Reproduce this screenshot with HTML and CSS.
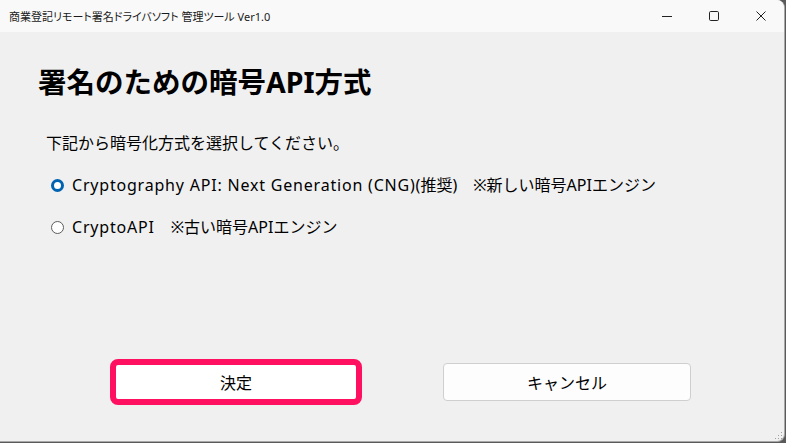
FILE: index.html
```html
<!DOCTYPE html>
<html lang="ja">
<head>
    <meta charset="UTF-8" />
    <title>商業登記リモート署名ドライバソフト 管理ツール Ver1.0</title>
    <link rel="stylesheet" href="styles.css">
</head>
<body>
    <div class="window">
        <header class="titlebar">
            <span class="title">商業登記リモート署名ドライバソフト 管理ツール Ver1.0</span>
            <div class="controls">
                <span class="ctl">
                    <svg width="10" height="10" viewBox="0 0 10 10"><path d="M0 5.5h10" stroke="#222" stroke-width="1"/></svg>
                </span>
                <span class="ctl">
                    <svg width="10" height="10" viewBox="0 0 10 10"><rect x="0.5" y="0.5" width="9" height="9" rx="1.2" fill="none" stroke="#222" stroke-width="1"/></svg>
                </span>
                <span class="ctl">
                    <svg width="10" height="10" viewBox="0 0 10 10"><path d="M0.5 0.5l9 9M9.5 0.5l-9 9" stroke="#222" stroke-width="1"/></svg>
                </span>
            </div>
        </header>

        <main class="content">
            <h1>署名のための暗号API方式</h1>
            <p class="lead">下記から暗号化方式を選択してください。</p>

            <div class="options">
                <label class="option">
                    <input type="radio" name="api" checked />
                    <span class="radio"></span>
                    <span><span class="latin">Cryptography API: Next Generation (CNG)</span>(推奨)　※新しい暗号APIエンジン</span>
                </label>
                <label class="option">
                    <input type="radio" name="api" />
                    <span class="radio"></span>
                    <span><span class="latin">CryptoAPI</span>　※古い暗号APIエンジン</span>
                </label>
            </div>

            <div class="actions">
                <button class="btn btn-ok">決定</button>
                <button class="btn btn-cancel">キャンセル</button>
            </div>
        </main>
        <span class="grip"></span>
    </div>
</body>
</html>
```

FILE: styles.css
```css
* {
    margin: 0;
    padding: 0;
    box-sizing: border-box;
    font-family: "Noto Sans", "Noto Sans CJK JP", sans-serif;
}
body {
    width: 786px;
    height: 443px;
    background: #5a5a5a;
    overflow: hidden;
}
.window {
    position: relative;
    width: 785px;
    height: 442px;
    background: #f0f0f0;
    border: 1px solid #a8a8a8;
    border-left: none;
    border-top: none;
    border-radius: 0 8px 8px 0;
    display: flex;
    flex-direction: column;
    overflow: hidden;
    color: #000;
}
.titlebar {
    height: 32px;
    background: #f9f9f9;
    display: flex;
    align-items: center;
    justify-content: space-between;
    padding-left: 9px;
}
.title {
    font-size: 11px;
    color: #1a1a1a;
    font-feature-settings: "palt";
}
.controls {
    display: flex;
    height: 100%;
}
.ctl {
    width: 47px;
    display: flex;
    align-items: center;
    justify-content: center;
}
.content {
    flex: 1;
    padding: 30px 0 0 38px;
    display: flex;
    flex-direction: column;
}
h1 {
    font-size: 28.5px;
    font-weight: 700;
    line-height: 40px;
}
.lead {
    margin: 31px 0 0 8px;
    font-size: 16px;
    line-height: 20px;
}
.options {
    display: flex;
    flex-direction: column;
    gap: 22px;
    margin: 22px 0 0 13px;
}
.option {
    display: flex;
    align-items: center;
    gap: 8px;
    font-size: 16px;
    line-height: 20px;
}
.latin {
    letter-spacing: 0.8px;
}
.option input {
    display: none;
}
.radio {
    width: 13px;
    height: 13px;
    border-radius: 50%;
    border: 1px solid #5c5c5c;
    background: #fff;
}
.option input:checked + .radio {
    border: 3.5px solid #0063b1;
    background: #fff;
}
.actions {
    display: flex;
    gap: 81px;
    margin: 122px 0 0 72px;
    align-items: center;
}
.btn {
    width: 248px;
    height: 38px;
    font-size: 16px;
    background: #fdfdfd;
    border: 1px solid #cfcfcf;
    border-radius: 4px;
    color: #000;
}
.btn-ok {
    width: 252px;
    height: 46px;
    background: #fff;
    border: 6px solid #ff1060;
    border-radius: 8px;
}
.grip {
    position: absolute;
    right: 2px;
    bottom: 2px;
    width: 8px;
    height: 8px;
    background: radial-gradient(circle, #a0a0a0 0.8px, transparent 1px) 0 0 / 3px 3px;
    clip-path: polygon(100% 0, 100% 100%, 0 100%);
}
```
